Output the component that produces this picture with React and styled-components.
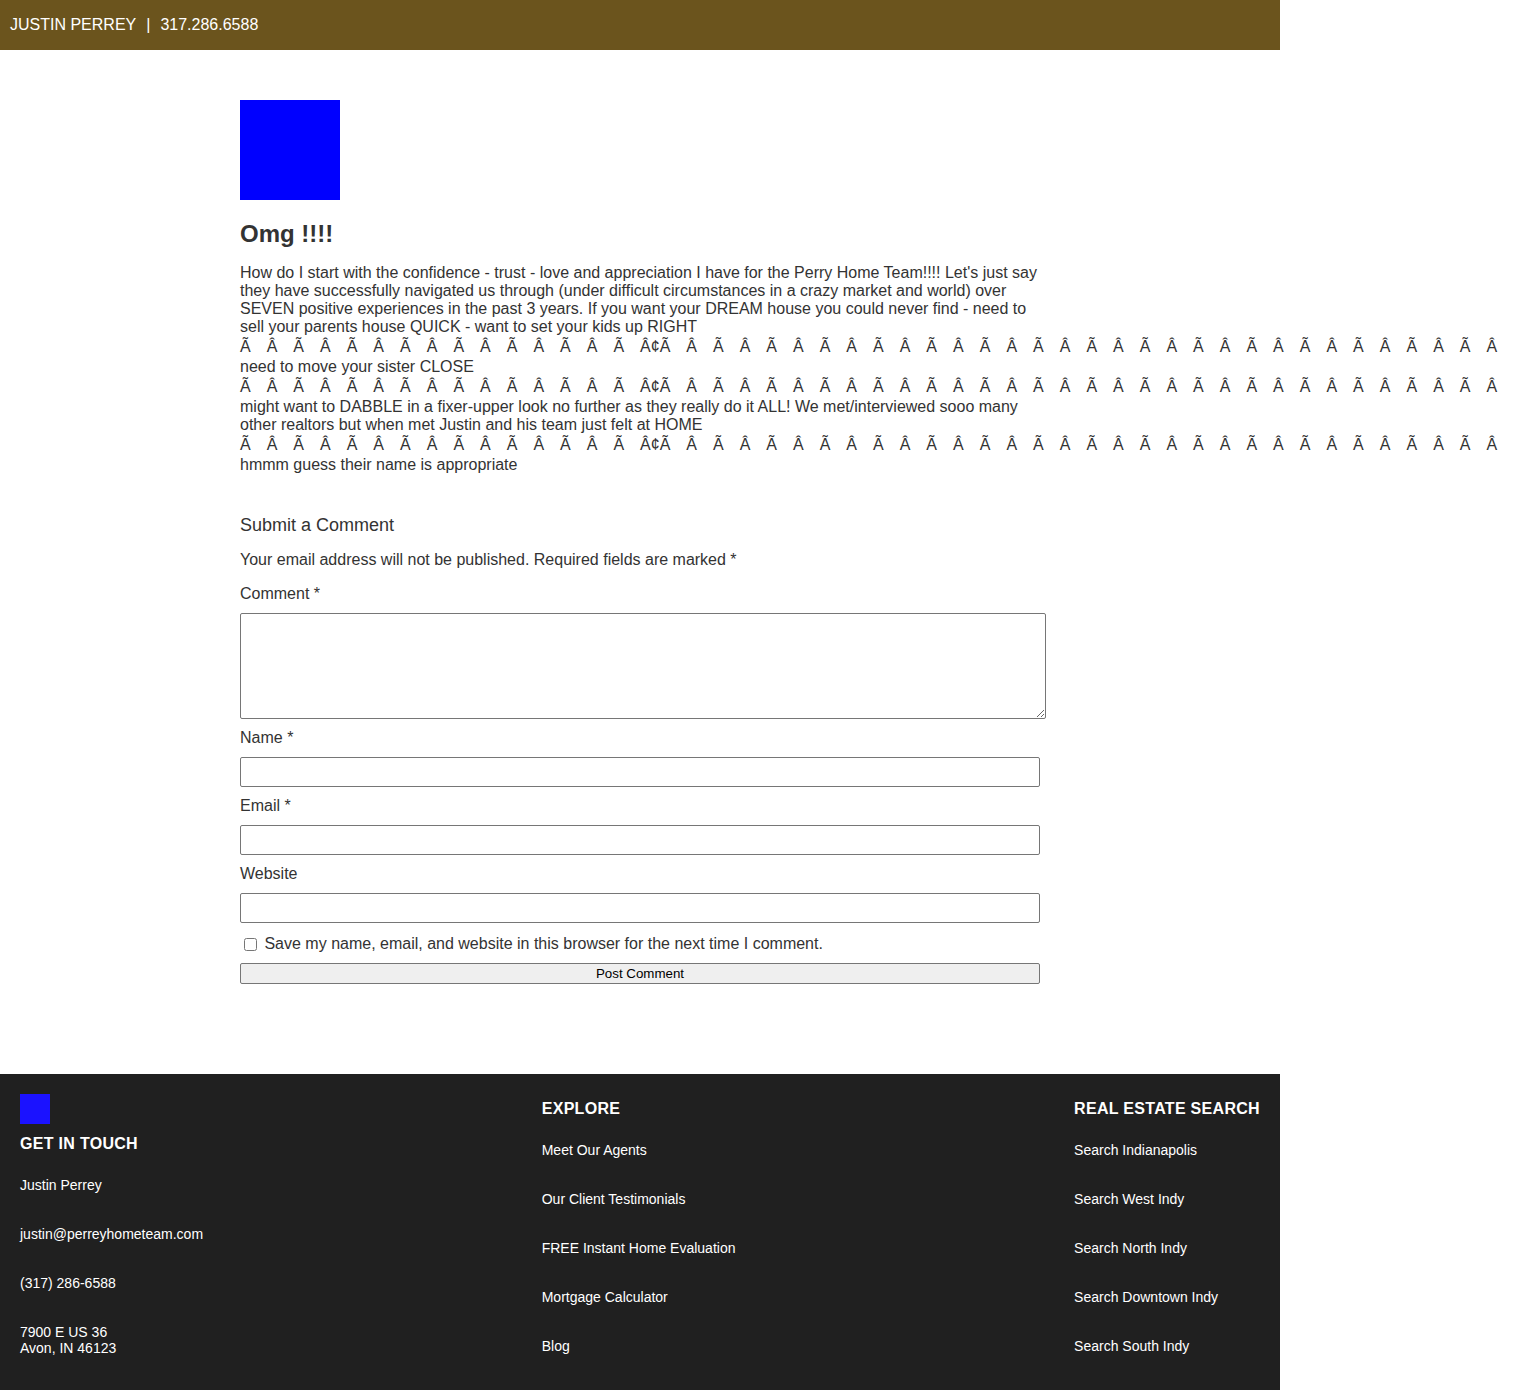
import React from "react";
import styled, { createGlobalStyle } from "styled-components";

const GlobalStyle = createGlobalStyle`
  body {
    margin: 0;
    font-family: "Liberation Sans", Arial, sans-serif;
    color: #333;
    background: #fff;
  }
`;

const A_TILDE = "\u00c3";
const A_CIRC = "\u00c2";

// long unbreakable run of mojibake glyphs, as it shows in the source text
const buildMoji = () => {
  const head = Array.from({ length: 15 }, (_, i) => (i % 2 === 0 ? A_TILDE : A_CIRC));
  const tail = Array.from({ length: 31 }, (_, i) => (i % 2 === 0 ? A_CIRC : A_TILDE));
  return [...head, "\u00c2\u00a2\u00c3", ...tail].join("\u2003");
};
const MOJI = buildMoji();

const footerColumns = [
  {
    title: "EXPLORE",
    items: [
      "Meet Our Agents",
      "Our Client Testimonials",
      "FREE Instant Home Evaluation",
      "Mortgage Calculator",
      "Blog"
    ]
  },
  {
    title: "REAL ESTATE SEARCH",
    items: [
      "Search Indianapolis",
      "Search West Indy",
      "Search North Indy",
      "Search Downtown Indy",
      "Search South Indy"
    ]
  }
];

function App() {
  return (
    <Page>
      <GlobalStyle />
      <TopBar>
        JUSTIN PERREY<Divider>|</Divider>317.286.6588
      </TopBar>
      <Main>
        <PostImage />
        <PostTitle>Omg !!!!</PostTitle>
        <PostBody>
          How do I start with the confidence - trust - love and appreciation I
          have for the Perry Home Team!!!! Let's just say they have successfully
          navigated us through (under difficult circumstances in a crazy market
          and world) over SEVEN positive experiences in the past 3 years. If you
          want your DREAM house you could never find - need to sell your parents
          house QUICK - want to set your kids up RIGHT <Moji>{MOJI}</Moji> need to
          move your sister CLOSE <Moji>{MOJI}</Moji> might want to DABBLE in a
          fixer-upper look no further as they really do it ALL! We
          met/interviewed sooo many other realtors but when met Justin and his
          team just felt at HOME <Moji>{MOJI}</Moji> hmmm guess their name is
          appropriate
        </PostBody>

        <CommentForm onSubmit={(e) => e.preventDefault()}>
          <FormTitle>Submit a Comment</FormTitle>
          <Notice>
            Your email address will not be published. Required fields are marked *
          </Notice>
          <FieldLabel htmlFor="comment">Comment *</FieldLabel>
          <CommentBox id="comment" />
          <FieldLabel htmlFor="author">Name *</FieldLabel>
          <TextInput id="author" type="text" />
          <FieldLabel htmlFor="email">Email *</FieldLabel>
          <TextInput id="email" type="text" />
          <FieldLabel htmlFor="url">Website</FieldLabel>
          <TextInput id="url" type="text" />
          <ConsentRow>
            <input type="checkbox" /> Save my name, email, and website in this
            browser for the next time I comment.
          </ConsentRow>
          <SubmitButton type="submit">Post Comment</SubmitButton>
        </CommentForm>
      </Main>

      <Footer>
        <FooterColumn>
          <FooterLogo />
          <FooterHeading>GET IN TOUCH</FooterHeading>
          <FooterItem>Justin Perrey</FooterItem>
          <FooterItem>justin@perreyhometeam.com</FooterItem>
          <FooterItem>(317) 286-6588</FooterItem>
          <FooterItem>
            7900 E US 36
            <br />
            Avon, IN 46123
          </FooterItem>
        </FooterColumn>
        {footerColumns.map((col) => (
          <FooterColumn key={col.title}>
            <FooterHeading>{col.title}</FooterHeading>
            {col.items.map((item) => (
              <FooterItem key={item}>{item}</FooterItem>
            ))}
          </FooterColumn>
        ))}
      </Footer>
    </Page>
  );
}

export default App;

const Page = styled.div`
  width: 1280px;
`;

const TopBar = styled.header`
  height: 50px;
  background: #6b541d;
  color: #fff;
  font-size: 16px;
  display: flex;
  align-items: center;
  padding: 0 10px;
  box-sizing: border-box;
`;

const Divider = styled.span`
  margin: 0 10px;
`;

const Main = styled.main`
  width: 800px;
  margin: 0 auto;
  padding: 50px 0 90px;
`;

const PostImage = styled.div`
  width: 100px;
  height: 100px;
  background: #0000ff;
  margin-bottom: 20px;
`;

const PostTitle = styled.h1`
  margin: 0 0 16px;
  font-size: 24px;
  line-height: 28px;
  font-weight: bold;
  color: #333;
`;

const PostBody = styled.p`
  margin: 0;
  font-size: 16px;
  line-height: 18px;
`;

const Moji = styled.span`
  white-space: nowrap;
  line-height: 22px;
`;

const CommentForm = styled.form`
  margin-top: 41px;
  font-size: 16px;
`;

const FormTitle = styled.h3`
  margin: 0 0 15px;
  font-size: 18px;
  font-weight: normal;
  line-height: 21px;
`;

const Notice = styled.p`
  margin: 0 0 16px;
  line-height: 18px;
`;

const FieldLabel = styled.label`
  display: block;
  line-height: 18px;
  margin-bottom: 10px;
`;

const CommentBox = styled.textarea`
  display: block;
  width: 100%;
  height: 100px;
  padding: 2px;
  margin: 0 0 10px;
  border: 1px solid #767676;
  border-radius: 2px;
  font-family: monospace;
`;

const TextInput = styled.input`
  display: block;
  width: 800px;
  height: 30px;
  box-sizing: border-box;
  margin: 0 0 10px;
  border: 1px solid #767676;
  border-radius: 2px;
  padding: 1px 2px;
`;

const ConsentRow = styled.label`
  display: block;
  line-height: 18px;
  margin: 12px 0 9px;
  input {
    margin: 3px 3px 3px 4px;
    width: 13px;
    height: 13px;
    vertical-align: -2px;
  }
`;

const SubmitButton = styled.button`
  display: block;
  width: 800px;
  height: 21px;
  padding: 1px 6px;
  background: #efefef;
  border: 1px solid #767676;
  border-radius: 2px;
  font-family: "Liberation Sans", Arial, sans-serif;
  font-size: 13.33px;
  color: #000;
`;

const Footer = styled.footer`
  background: #202020;
  color: #fff;
  display: flex;
  justify-content: space-between;
  align-items: flex-start;
  padding: 20px 20px 2px;
`;

const FooterColumn = styled.div`
  display: flex;
  flex-direction: column;
`;

const FooterLogo = styled.div`
  width: 30px;
  height: 30px;
  background: #1b12ff;
  margin-bottom: 5px;
`;

const FooterHeading = styled.h4`
  margin: 0 0 18px;
  font-size: 16px;
  line-height: 30px;
  font-weight: bold;
  letter-spacing: 0.3px;
`;

const FooterItem = styled.div`
  font-size: 14px;
  line-height: 16px;
  margin-bottom: 33px;
`;
